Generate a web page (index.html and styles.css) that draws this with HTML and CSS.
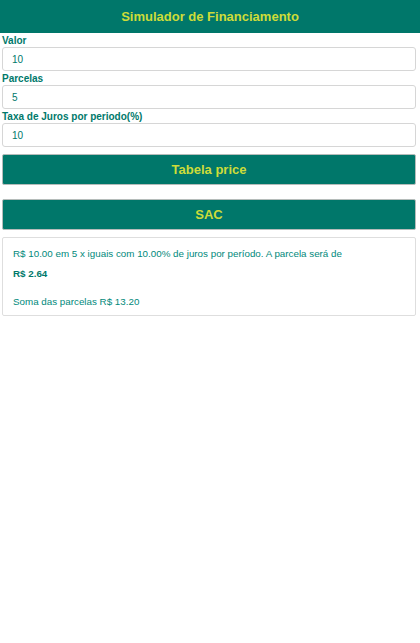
FILE: index.html
```html
<!doctype html>
<html>

<head>
    <title>Simulador de Financiamento</title>
    <link rel="stylesheet" href="styles.css">
</head>

<body>
    <header class="topbar">
        <h1 class="title">Simulador de Financiamento</h1>
    </header>
    <form class="sim-form">
        <label class="field-label" for="valor">Valor</label>
        <input class="field" id="valor" type="text" value="10" />
        <label class="field-label" for="parcelas">Parcelas</label>
        <input class="field" id="parcelas" type="text" value="5" />
        <label class="field-label" for="taxa">Taxa de Juros por periodo(%)</label>
        <input class="field" id="taxa" type="text" value="10" />
        <button type="button" class="btn btn-price">Tabela price</button>
        <button type="button" class="btn btn-sac">SAC</button>
    </form>
    <div class="result-area">
        <p class="result-text">R$ 10.00 em 5 x iguais com 10.00% de juros por período. A parcela será de</p>
        <p class="result-value">R$ 2.64</p>
        <p class="result-sum">Soma das parcelas R$ 13.20</p>
    </div>
</body>

</html>
```

FILE: styles.css
```css
* {
    margin: 0;
    box-sizing: border-box;
}

body {
    font-family: "Liberation Sans", Arial, sans-serif;
    color: #00796b;
    background-color: white;
}

.topbar {
    background-color: #00776a;
    height: 33px;
    display: flex;
    justify-content: center;
    align-items: center;
}

.title {
    font-size: 13px;
    font-weight: bold;
    color: #cddc39;
}

.sim-form {
    display: flex;
    flex-direction: column;
    padding: 0 4px 0 2px;
}

.field-label {
    font-size: 10px;
    font-weight: bold;
    color: #00796b;
    height: 14px;
    line-height: 15px;
}

.field {
    height: 24px;
    border: 1px solid #d6d6d6;
    border-radius: 3px;
    padding: 0 9px;
    font-family: "Liberation Sans", Arial, sans-serif;
    font-size: 10px;
    color: #00796b;
    outline: none;
}

.btn {
    display: block;
    width: 100%;
    height: 31px;
    margin-top: 7px;
    background-color: #00776a;
    border: 1px solid #b5bcba;
    border-radius: 2px;
    color: #cddc39;
    font-family: "Liberation Sans", Arial, sans-serif;
    font-size: 13px;
    font-weight: bold;
    cursor: pointer;
}

.btn-sac {
    margin-top: 14px;
}

.result-area {
    margin: 7px 4px 0 2px;
    border: 1px solid #dedede;
    border-radius: 2px;
    padding: 9px 10px 9px 10px;
    font-size: 9.8px;
    color: #00897b;
    height: 79px;
}

.result-text {
    line-height: 14px;
}

.result-value {
    font-weight: bold;
    color: #00796b;
    margin-top: 6px;
    line-height: 14px;
}

.result-sum {
    margin-top: 14px;
    line-height: 14px;
}
```
